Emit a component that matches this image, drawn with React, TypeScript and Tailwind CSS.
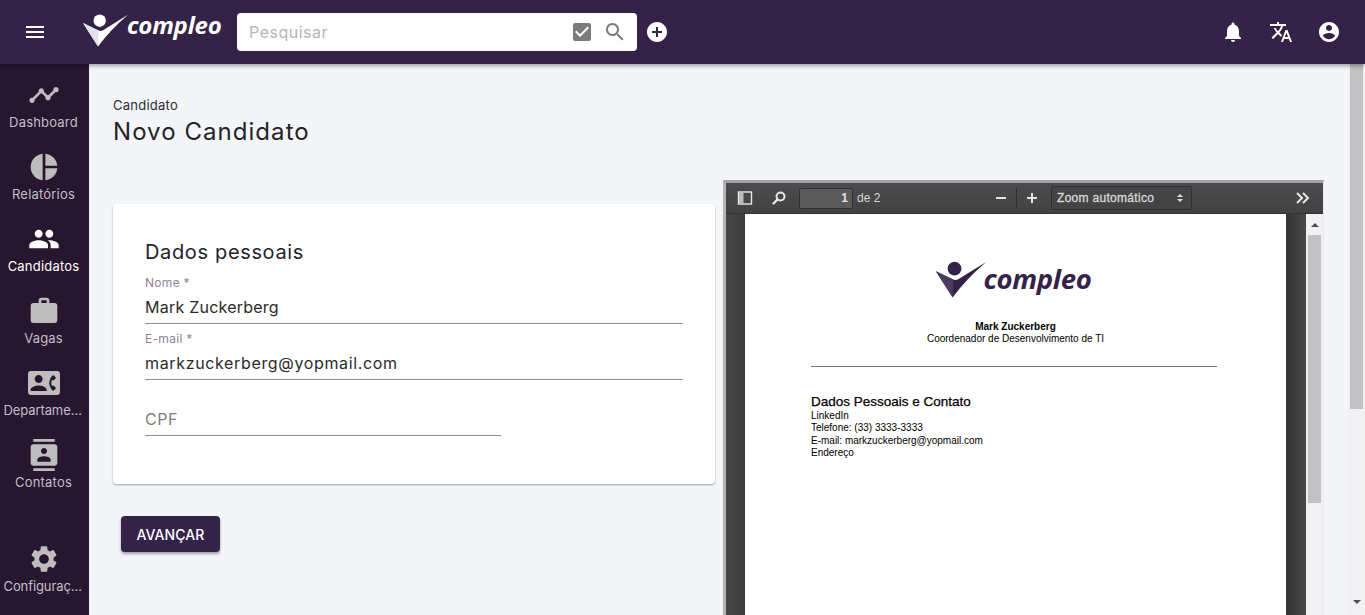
const P = {
  menu: "M3 18h18v-2H3v2zm0-5h18v-2H3v2zm0-7v2h18V6H3z",
  timeline: "M23 8c0 1.1-.9 2-2 2-.18 0-.35-.02-.51-.07l-3.56 3.55c.05.16.07.34.07.52 0 1.1-.9 2-2 2s-2-.9-2-2c0-.18.02-.36.07-.52l-2.55-2.55c-.16.05-.34.07-.52.07s-.36-.02-.52-.07l-4.55 4.56c.05.16.07.33.07.51 0 1.1-.9 2-2 2s-2-.9-2-2 .9-2 2-2c.18 0 .35.02.51.07l4.56-4.55C8.02 9.36 8 9.18 8 9c0-1.1.9-2 2-2s2 .9 2 2c0 .18-.02.36-.07.52l2.55 2.55c.16-.05.34-.07.52-.07s.36.02.52.07l3.55-3.56C19.02 8.35 19 8.18 19 8c0-1.1.9-2 2-2s2 .9 2 2z",
  pie: "M11 2v20c-5.07-.5-9-4.79-9-10s3.93-9.5 9-10zm2.03 0v8.99H22c-.47-4.74-4.24-8.52-8.97-8.99zm0 11.01V22c4.74-.47 8.5-4.25 8.97-8.99h-8.97z",
  people: "M16 11c1.66 0 2.99-1.34 2.99-3S17.66 5 16 5c-1.66 0-3 1.34-3 3s1.34 3 3 3zm-8 0c1.66 0 2.99-1.34 2.99-3S9.66 5 8 5C6.34 5 5 6.34 5 8s1.34 3 3 3zm0 2c-2.33 0-7 1.17-7 3.5V19h14v-2.5c0-2.33-4.67-3.5-7-3.5zm8 0c-.29 0-.62.02-.97.05 1.16.84 1.97 1.97 1.97 3.45V19h6v-2.5c0-2.33-4.67-3.5-7-3.5z",
  work: "M20 6h-4V4c0-1.11-.89-2-2-2h-4c-1.11 0-2 .89-2 2v2H4c-1.11 0-1.99.89-1.99 2L2 19c0 1.11.89 2 2 2h16c1.11 0 2-.89 2-2V8c0-1.11-.89-2-2-2zm-6 0h-4V4h4v2z",
  phone: "M22 3H2C.9 3 0 3.9 0 5v14c0 1.1.9 2 2 2h20c1.1 0 1.99-.9 1.99-2L24 5c0-1.1-.9-2-2-2zM8 6c1.66 0 3 1.34 3 3s-1.34 3-3 3-3-1.34-3-3 1.34-3 3-3zm6 12H2v-1c0-2 4-3.1 6-3.1s6 1.1 6 3.1v1zm3.85-4h1.64L21 16l-1.99 1.99c-1.31-.98-2.28-2.38-2.73-3.99-.18-.64-.28-1.31-.28-2s.1-1.36.28-2c.45-1.62 1.42-3.01 2.73-3.99L21 8l-1.51 2h-1.64c-.22.63-.35 1.3-.35 2s.13 1.37.35 2z",
  contacts: "M20 0H4v2h16V0zM4 24h16v-2H4v2zM20 4H4c-1.1 0-2 .9-2 2v12c0 1.1.9 2 2 2h16c1.1 0 2-.9 2-2V6c0-1.1-.9-2-2-2zm-8 2.75c1.24 0 2.25 1.01 2.25 2.25s-1.01 2.25-2.25 2.25S9.75 10.24 9.75 9 10.76 6.75 12 6.75zM17 17H7v-1.5c0-1.67 3.33-2.5 5-2.5s5 .83 5 2.5V17z",
  settings: "M19.14 12.94c.04-.3.06-.61.06-.94 0-.32-.02-.64-.07-.94l2.03-1.58c.18-.14.23-.41.12-.61l-1.92-3.32c-.12-.22-.37-.29-.59-.22l-2.39.96c-.5-.38-1.03-.7-1.62-.94l-.36-2.54c-.04-.24-.24-.41-.48-.41h-3.84c-.24 0-.43.17-.47.41l-.36 2.54c-.59.24-1.13.57-1.62.94l-2.39-.96c-.22-.08-.47 0-.59.22L2.74 8.87c-.12.21-.08.47.12.61l2.03 1.58c-.05.3-.09.63-.09.94s.02.64.07.94l-2.03 1.58c-.18.14-.23.41-.12.61l1.92 3.32c.12.22.37.29.59.22l2.39-.96c.5.38 1.03.7 1.62.94l.36 2.54c.05.24.24.41.48.41h3.84c.24 0 .44-.17.47-.41l.36-2.54c.59-.24 1.13-.56 1.62-.94l2.39.96c.22.08.47 0 .59-.22l1.92-3.32c.12-.22.07-.47-.12-.61l-2.01-1.58zM12 15.6c-1.98 0-3.6-1.62-3.6-3.6s1.62-3.6 3.6-3.6 3.6 1.62 3.6 3.6-1.62 3.6-3.6 3.6z",
  check: "M19 3H5c-1.11 0-2 .9-2 2v14c0 1.1.89 2 2 2h14c1.11 0 2-.9 2-2V5c0-1.1-.89-2-2-2zm-9 14l-5-5 1.41-1.41L10 14.17l7.59-7.59L19 8l-9 9z",
  search: "M15.5 14h-.79l-.28-.27C15.41 12.59 16 11.11 16 9.5 16 5.91 13.09 3 9.5 3S3 5.91 3 9.5 5.91 16 9.5 16c1.61 0 3.09-.59 4.23-1.57l.27.28v.79l5 4.99L20.49 19l-4.99-5zm-6 0C7.01 14 5 11.99 5 9.5S7.01 5 9.5 5 14 7.01 14 9.5 11.99 14 9.5 14z",
  add: "M12 2C6.48 2 2 6.48 2 12s4.48 10 10 10 10-4.48 10-10S17.52 2 12 2zm5 11h-4v4h-2v-4H7v-2h4V7h2v4h4v2z",
  bell: "M12 22c1.1 0 2-.9 2-2h-4c0 1.1.89 2 2 2zm6-6v-5c0-3.07-1.64-5.64-4.5-6.32V4c0-.83-.67-1.5-1.5-1.5s-1.5.67-1.5 1.5v.68C7.63 5.36 6 7.92 6 11v5l-2 2v1h16v-1l-2-2z",
  translate: "M12.87 15.07l-2.54-2.51.03-.03c1.74-1.94 2.98-4.17 3.71-6.53H17V4h-7V2H8v2H1v1.99h11.17C11.5 7.92 10.44 9.75 9 11.35 8.07 10.32 7.3 9.19 6.69 8h-2c.73 1.63 1.73 3.17 2.98 4.56l-5.09 5.02L4 19l5-5 3.11 3.11.76-2.04zM18.5 10h-2L12 22h2l1.12-3h4.75L21 22h2l-4.5-12zm-2.62 7l1.62-4.33L19.12 17h-3.24z",
  account: "M12 2C6.48 2 2 6.48 2 12s4.48 10 10 10 10-4.48 10-10S17.52 2 12 2zm0 3c1.66 0 3 1.34 3 3s-1.34 3-3 3-3-1.34-3-3 1.34-3 3-3zm0 14.2c-2.5 0-4.71-1.28-6-3.22.03-1.99 4-3.08 6-3.08 1.99 0 5.97 1.09 6 3.08-1.29 1.94-3.5 3.22-6 3.22z",
};

function Icon({ d, className }: { d: string; className?: string }) {
  return (
    <svg viewBox="0 0 24 24" fill="currentColor" className={className}>
      <path d={d} />
    </svg>
  );
}

function Mark({ className, body, shade }: { className: string; body: string; shade: string }) {
  return (
    <svg viewBox="0 0 45 34" className={className}>
      <circle cx="16.7" cy="7.7" r="6.2" fill={body} />
      <path d="M0 10 L15.5 17.5 Q18 18.5 20 17.2 L45 1.7 Q27 17 15 33.5 Z" fill={body} />
      <path d="M0 10 L15.5 17.5 L15 33.5 Z" fill={shade} />
    </svg>
  );
}

function NavItem({ d, label, active, long }: { d: string; label: string; active?: boolean; long?: boolean }) {
  return (
    <div className={`h-[72px] w-[87px] flex flex-col items-center ${active ? "text-white" : "text-[#bdbdbd]"}`}>
      <Icon d={d} className="w-[32px] h-[32px] shrink-0" />
      <span className={`mt-[1px] text-center truncate text-[13px] leading-[20px] ${long ? "w-[80px] tracking-[-0.1px]" : "w-[82px] tracking-[0.2px]"} ${active ? "text-white" : "text-[#c4bfc9]"}`}>
        {label}
      </span>
    </div>
  );
}

function Field({ label, value, narrow, track }: { label?: string; value: string; narrow?: boolean; track: string }) {
  return (
    <div className={`h-[56px] flex flex-col justify-end border-b border-[#8e8e8e] ${narrow ? "w-[356px]" : "w-full"}`}>
      {label && <div className="text-[12px] leading-[16px] text-[#8f8299] tracking-[0.3px]">{label}</div>}
      <div className={`h-[32px] text-[16px] leading-[32px] ${track} ${label ? "text-[#2a2a2a]" : "text-[#7d7d7d]"}`}>{value}</div>
    </div>
  );
}

export default function App() {
  return (
    <div className="h-screen w-full overflow-hidden flex flex-col bg-[#f4f5f8] font-['Inter',sans-serif]">
      <header className="relative z-10 h-16 shrink-0 bg-[#352249] text-white flex items-center shadow-[0_2px_4px_rgba(0,0,0,0.35)]">
        <div className="w-[83px] pl-[23px] shrink-0">
          <Icon d={P.menu} className="w-6 h-6" />
        </div>
        <div className="w-[154px] shrink-0 flex items-start -mt-[4px]">
          <Mark className="w-[45px] h-[34px] shrink-0" body="#ffffff" shade="#e3e0e6" />
          <span className="-ml-[1px] -mt-[5px] text-[24px] leading-[34px] font-bold italic tracking-[-0.25px] font-['Open_Sans',sans-serif]">compleo</span>
        </div>
        <div className="w-[400px] h-[38px] shrink-0 bg-white rounded-[4px] flex items-center pl-3 pr-[10px]">
          <span className="flex-1 text-[16px] text-[#b5b5b5] tracking-[0.5px]">Pesquisar</span>
          <Icon d={P.check} className="w-6 h-6 text-[#7b7b7b] mr-[9px]" />
          <Icon d={P.search} className="w-6 h-6 text-[#7b7b7b]" />
        </div>
        <Icon d={P.add} className="w-6 h-6 ml-2 shrink-0" />
        <div className="ml-auto flex items-center gap-6 pr-6">
          <Icon d={P.bell} className="w-6 h-6" />
          <Icon d={P.translate} className="w-6 h-6" />
          <Icon d={P.account} className="w-6 h-6" />
        </div>
      </header>

      <div className="flex-1 min-h-0 flex">
        <aside className="w-[89px] shrink-0 bg-[#26162f] flex flex-col justify-between pt-[15px]">
          <div>
            <NavItem d={P.timeline} label="Dashboard" />
            <NavItem d={P.pie} label="Relatórios" />
            <NavItem d={P.people} label="Candidatos" active />
            <NavItem d={P.work} label="Vagas" />
            <NavItem d={P.phone} label="Departamentos" long />
            <NavItem d={P.contacts} label="Contatos" />
          </div>
          <NavItem d={P.settings} label="Configurações" long />
        </aside>

        <main className="flex-1 min-w-0 flex">
          <div className="flex-1 min-w-0 pl-6 pt-[33px] overflow-hidden">
            <div className="text-[13px] leading-[16px] text-[#2d2d33] tracking-[0.25px]">Candidato</div>
            <h1 className="mt-[3px] text-[24px] leading-[32px] font-normal text-[#232329] tracking-[1.05px]">Novo Candidato</h1>
            <div className="mt-[32px] flex gap-2">
              <div className="w-[602px] shrink-0 pt-6">
                <section className="bg-white rounded-[4px] h-[280px] px-8 pt-8 shadow-[0_1px_2px_rgba(0,0,0,0.35)]">
                  <h2 className="h-[32px] text-[20px] leading-[32px] font-normal text-[#232329] tracking-[0.65px]">Dados pessoais</h2>
                  <Field label="Nome *" value="Mark Zuckerberg" track="tracking-[0.23px]" />
                  <Field label="E-mail *" value="markzuckerberg@yopmail.com" track="tracking-[0.65px]" />
                  <Field value="CPF" narrow track="tracking-[0.5px]" />
                </section>
                <button className="mt-8 ml-2 w-[99px] h-[36px] rounded-[4px] bg-[#352249] text-white text-[14px] font-medium tracking-[0.1px] shadow-[0_2px_3px_rgba(0,0,0,0.35)]">AVANÇAR</button>
              </div>

              <section className="w-[601px] h-[440px] shrink-0 border-l-[3px] border-t-[3px] border-r border-[#a3a3a3] border-l-[#b5b5b5] border-r-[#ebebeb] flex flex-col font-['Liberation_Sans',sans-serif]">
                <div className="h-[31px] shrink-0 bg-[linear-gradient(#4c4c4c,#424242)] border-b border-[#333] flex items-center text-[#d9d9d9] text-[12px]">
                  <svg viewBox="0 0 16 16" className="w-[16px] h-[16px] ml-[11px] shrink-0">
                    <rect x="1.5" y="2" width="13" height="12" fill="none" stroke="#e8e8e8" strokeWidth="1.4" />
                    <rect x="2" y="2.5" width="4.5" height="11" fill="#bbb" />
                  </svg>
                  <svg viewBox="0 0 16 16" className="w-[16px] h-[16px] ml-[18px] shrink-0">
                    <circle cx="9.5" cy="6.5" r="4" fill="none" stroke="#e8e8e8" strokeWidth="2" />
                    <path d="M6.5 9.5 L2.5 13.5" stroke="#e8e8e8" strokeWidth="2.4" strokeLinecap="round" />
                  </svg>
                  <div className="ml-[12px] w-[54px] h-[21px] shrink-0 rounded-[2px] bg-[#5a5a5a] border border-[#2f2f2f] text-right pr-[4px] leading-[19px] font-bold text-[#e2e2e2]">1</div>
                  <span className="ml-[4px] w-[139px] shrink-0">de 2</span>
                  <div className="w-[10px] h-[2px] bg-[#e4e4e4] shrink-0" />
                  <div className="ml-[10px] w-px h-[20px] bg-[#2f2f2f] shrink-0" />
                  <span className="relative ml-[10px] w-[10px] h-[10px] shrink-0">
                    <span className="absolute left-0 top-[4px] w-[10px] h-[2px] bg-[#e4e4e4]" />
                    <span className="absolute left-[4px] top-0 w-[2px] h-[10px] bg-[#e4e4e4]" />
                  </span>
                  <div className="ml-[14px] w-[141px] h-[24px] shrink-0 rounded-[2px] bg-[#444] border border-[#2f2f2f] flex items-center pl-[5px] pr-[8px] text-[#d9d9d9]">
                    <span className="flex-1 tracking-[0.3px] [-webkit-text-stroke:0.3px_#d9d9d9]">Zoom automático</span>
                    <span className="flex flex-col gap-[2px]">
                      <span className="w-0 h-0 border-x-[3px] border-x-transparent border-b-[3px] border-b-[#ddd]" />
                      <span className="w-0 h-0 border-x-[3px] border-x-transparent border-t-[3px] border-t-[#ddd]" />
                    </span>
                  </div>
                  <svg viewBox="0 0 16 16" className="w-[16px] h-[16px] ml-[103px] shrink-0">
                    <path d="M2 3 L7 8 L2 13 M8 3 L13 8 L8 13" fill="none" stroke="#e8e8e8" strokeWidth="2" />
                  </svg>
                </div>
                <div className="flex-1 min-h-0 flex">
                  <div className="flex-1 min-w-0 bg-[linear-gradient(90deg,#484848_0,#3a3a3a_19px,#333_19px,#333_560px,#484848_100%)] px-[19px]">
                    <div className="h-full w-[541px] bg-white px-[66px] pt-[46px] text-black">
                      <div className="h-[38px] flex justify-center -translate-x-[2px]">
                        <Mark className="w-[52px] h-[38px] shrink-0" body="#352249" shade="#4c3c5e" />
                        <span className="-ml-[4px] -mt-[1px] text-[27.5px] leading-[40px] font-bold italic tracking-[-0.3px] text-[#352249] font-['Open_Sans',sans-serif]">compleo</span>
                      </div>
                      <div className="mt-[23px] text-center text-[10px] leading-[12px] font-bold">Mark Zuckerberg</div>
                      <div className="text-center text-[10px] leading-[12px]">Coordenador de Desenvolvimento de TI</div>
                      <div className="mt-[21px] w-[406px] border-t border-[#777]" />
                      <div className="mt-[27px] text-[13.5px] leading-[16px] [-webkit-text-stroke:0.25px_black]">Dados Pessoais e Contato</div>
                      <div className="text-[10px] leading-[12.4px]">
                        <div>LinkedIn</div>
                        <div>Telefone: (33) 3333-3333</div>
                        <div>E-mail: markzuckerberg@yopmail.com</div>
                        <div>Endereço</div>
                      </div>
                    </div>
                  </div>
                  <div className="w-[17px] shrink-0 bg-[#f1f1f1] flex flex-col pl-[2px] pr-[2px]">
                    <div className="h-[21px] flex items-center justify-center">
                      <div className="w-0 h-0 border-x-[4px] border-x-transparent border-b-[4px] border-b-[#505050]" />
                    </div>
                    <div className="h-[268px] bg-[#c1c1c1]" />
                  </div>
                </div>
              </section>
            </div>
          </div>
          <div className="w-[17px] shrink-0 bg-[#f1f1f1] flex flex-col justify-between px-[2px]">
            <div className="h-[345px] bg-[#c1c1c1]" />
            <div className="h-[15px] flex justify-center">
              <div className="w-0 h-0 border-x-[4px] border-x-transparent border-t-[4px] border-t-[#505050]" />
            </div>
          </div>
        </main>
      </div>
    </div>
  );
}
